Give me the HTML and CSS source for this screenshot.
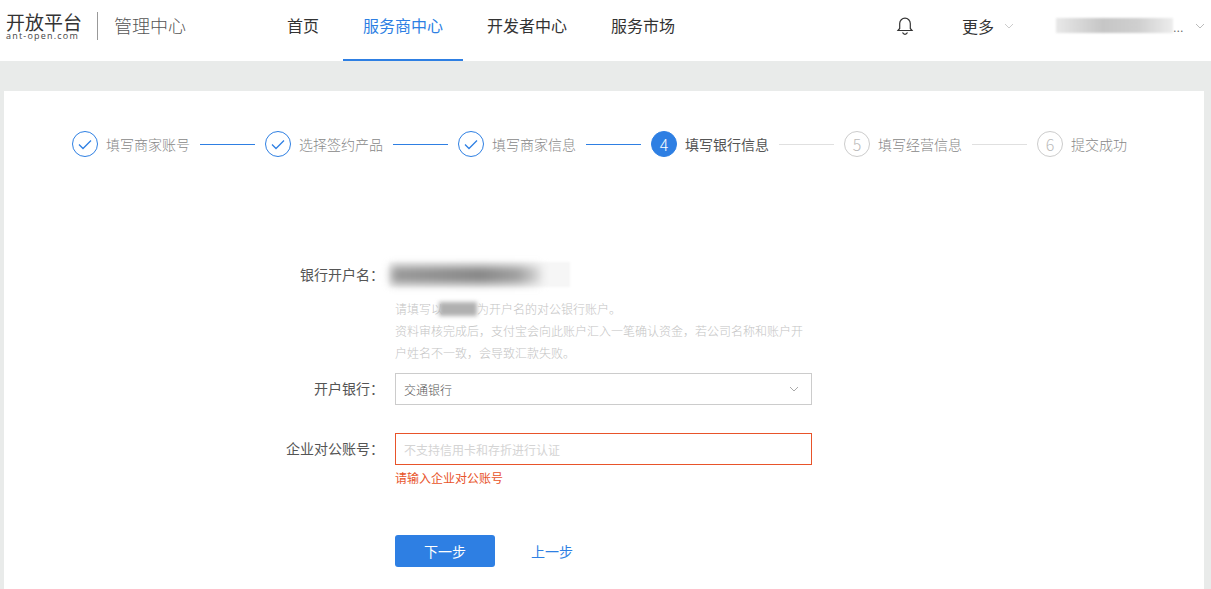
FILE: index.html
```html
<!DOCTYPE html>
<html lang="zh-CN">
<head>
  <meta charset="UTF-8">
  <title>填写银行信息 - 管理中心</title>
  <link rel="stylesheet" href="styles.css">
</head>
<body>

  <header class="topbar">
    <div class="logo">
      <div class="logo-name">开放平台</div>
      <div class="logo-site">ant-open.com</div>
    </div>
    <div class="logo-sub">管理中心</div>

    <nav class="nav">
      <a class="nav-item">首页</a>
      <a class="nav-item active">服务商中心</a>
      <a class="nav-item">开发者中心</a>
      <a class="nav-item">服务市场</a>
    </nav>

    <div class="top-right">
      <svg class="bell" width="18" height="20" viewBox="0 0 18 20" fill="none" stroke="#333" stroke-width="1.2">
        <path d="M2 14.5h14l-1.7-2V7.5a5.3 5.300 0 0 0-10.600 0v5z"/>
        <path d="M6.500 16.500c.6 1.200 1.500 1.800 2.500 1.800s1.900-.6 2.500-1.800"/>
      </svg>
      <span class="more">更多</span>
      <svg class="chev more-chev" width="10" height="6" viewBox="0 0 10 6" fill="none" stroke="#ccc"><path d="M1 1l4 4 4-4"/></svg>
      <div class="user">
        <span class="user-blur"></span>
        <span class="user-dots">...</span>
      </div>
      <svg class="chev" width="10" height="6" viewBox="0 0 10 6" fill="none" stroke="#bbb"><path d="M1 1l4 4 4-4"/></svg>
    </div>
  </header>

  <main class="card">
    <div class="steps">
      <div class="step done">
        <span class="circle"><svg width="14" height="11" viewBox="0 0 14 11" fill="none" stroke="#2e7fe3" stroke-width="1.300"><path d="M1 5.500l4 4 8-8"/></svg></span>
        <span class="step-text">填写商家账号</span>
      </div>
      <span class="line on"></span>
      <div class="step done">
        <span class="circle"><svg width="14" height="11" viewBox="0 0 14 11" fill="none" stroke="#2e7fe3" stroke-width="1.300"><path d="M1 5.500l4 4 8-8"/></svg></span>
        <span class="step-text">选择签约产品</span>
      </div>
      <span class="line on"></span>
      <div class="step done">
        <span class="circle"><svg width="14" height="11" viewBox="0 0 14 11" fill="none" stroke="#2e7fe3" stroke-width="1.300"><path d="M1 5.500l4 4 8-8"/></svg></span>
        <span class="step-text">填写商家信息</span>
      </div>
      <span class="line on"></span>
      <div class="step current">
        <span class="circle">4</span>
        <span class="step-text">填写银行信息</span>
      </div>
      <span class="line"></span>
      <div class="step">
        <span class="circle">5</span>
        <span class="step-text">填写经营信息</span>
      </div>
      <span class="line"></span>
      <div class="step">
        <span class="circle">6</span>
        <span class="step-text">提交成功</span>
      </div>
    </div>

    <form class="form">
      <div class="row name-row">
        <label class="label">银行开户名：</label>
        <div class="field">
          <div class="name-blur"><span class="name-blur-in"></span></div>
          <div class="help">
            <p>请填写以<span class="help-blur"></span>为开户名的对公银行账户。</p>
            <p>资料审核完成后，支付宝会向此账户汇入一笔确认资金，若公司名称和账户开户姓名不一致，会导致汇款失败。</p>
          </div>
        </div>
      </div>

      <div class="row">
        <label class="label">开户银行：</label>
        <div class="field">
          <div class="select">
            <span>交通银行</span>
            <svg width="10" height="6" viewBox="0 0 10 6" fill="none" stroke="#aaa"><path d="M1 1l4 4 4-4"/></svg>
          </div>
        </div>
      </div>

      <div class="row account-row">
        <label class="label">企业对公账号：</label>
        <div class="field">
          <input class="input error" type="text" placeholder="不支持信用卡和存折进行认证">
          <div class="error-text">请输入企业对公账号</div>
        </div>
      </div>

      <div class="row actions">
        <div class="field action-field">
          <button class="btn" type="button">下一步</button>
          <a class="prev">上一步</a>
        </div>
      </div>
    </form>
  </main>

</body>
</html>
```

FILE: styles.css
```css
* {
  box-sizing: border-box;
}

html, body {
  height: 100%;
}

body {
  margin: 0;
  overflow: hidden;
  background-color: #e9ebea;
  font-family: "Noto Sans CJK SC", "Noto Sans", sans-serif;
  font-size: 14px;
  font-weight: 300;
  color: #666;
}

/* top bar */
.topbar {
  display: flex;
  align-items: center;
  height: 61px;
  background: #fff;
}

.logo {
  align-self: flex-start;
  width: 98px;
  height: 28px;
  margin-top: 12px;
  padding-left: 6px;
  border-right: 1px solid #999;
}

.logo-name {
  height: 19px;
  font-size: 19px;
  font-weight: 400;
  line-height: 19px;
  color: #333;
  white-space: nowrap;
}

.logo-site {
  height: 9px;
  font-family: "Open Sans", sans-serif;
  font-size: 9px;
  line-height: 9px;
  font-weight: 400;
  letter-spacing: 1.2px;
  color: #444;
  white-space: nowrap;
}

.logo-sub {
  width: 169px;
  margin-bottom: 12px;
  padding-left: 16px;
  font-size: 18px;
  color: #555;
  white-space: nowrap;
}

.nav {
  display: flex;
  gap: 4px;
  height: 61px;
}

.nav-item {
  padding: 0 20px;
  line-height: 50px;
  font-size: 16px;
  font-weight: 400;
  color: #333;
  white-space: nowrap;
}

.nav-item.active {
  color: #2e7fe3;
  border-bottom: 2px solid #2e7fe3;
}

.top-right {
  display: flex;
  align-items: center;
  margin-left: auto;
  margin-bottom: 10px;
  padding-right: 6px;
}

.bell {
  margin-right: 48px;
}

.more {
  font-size: 16px;
  font-weight: 400;
  color: #333;
}

.more-chev {
  margin-left: 10px;
}

.user {
  display: flex;
  align-items: center;
  margin-left: 42px;
  margin-right: 12px;
}

.user-blur {
  flex-shrink: 0;
  width: 117px;
  height: 15px;
  background: linear-gradient(90deg, #e8e8e8, #c6c6c6 40%, #cfcfcf 70%, #ededed);
  filter: blur(1px);
}

.user-dots {
  width: 10px;
  color: #666;
}

.top-right .chev {
  flex-shrink: 0;
}

/* card */
.card {
  height: 498px;
  margin: 30px 7px 0 4px;
  padding: 40px 0 0 68px;
  background: #fff;
}

.steps {
  display: flex;
  align-items: center;
  height: 26px;
}

.step {
  display: flex;
  align-items: center;
  gap: 8px;
  white-space: nowrap;
}

.circle {
  display: flex;
  align-items: center;
  justify-content: center;
  width: 26px;
  height: 26px;
  border: 1px solid #ccc;
  border-radius: 50%;
  font-size: 16px;
  color: #bbb;
}

.step-text {
  width: 84px;
  color: #888;
}

.step.current .circle {
  background: #2e7fe3;
  border-color: #2e7fe3;
  color: #fff;
}

.step.current .step-text {
  color: #555;
  font-weight: 400;
}

.step.done .circle {
  border-color: #2e7fe3;
}

.line {
  width: 55px;
  height: 1px;
  margin: 0 10px;
  background: #e0e0e0;
}

.line.on {
  background: #2e7fe3;
}

/* form */
.form {
  margin-top: 104px;
  margin-left: -68px;
}

.row {
  display: flex;
}

.label {
  width: 380px;
  height: 30px;
  line-height: 30px;
  text-align: right;
  color: #555;
  font-weight: 400;
}

.name-row .label {
  margin-top: -2px;
}

.field {
  width: 417px;
  margin-left: 11px;
}

.name-row {
  height: 112px;
}

.name-blur {
  width: 181px;
  height: 25px;
  margin-top: 1px;
  margin-left: -6px;
  background: #f6f6f6;
  filter: blur(1px);
}

.name-blur-in {
  display: block;
  width: 150px;
  height: 18px;
  margin-left: 2px;
  transform: translateY(4px);
  background: linear-gradient(90deg, #9a9a9a, #868686 60%, #a0a0a0 85%, #ddd);
  filter: blur(4px);
}

.help {
  margin-top: 11px;
  font-size: 12px;
  line-height: 22px;
  color: #c4c4c4;
}

.help p {
  margin: 0;
}

.help-blur {
  display: inline-block;
  width: 38px;
  height: 14px;
  margin-left: -4px;
  vertical-align: -2px;
  background: #b0b0b0;
  filter: blur(2px);
}

.select {
  display: flex;
  align-items: center;
  justify-content: space-between;
  height: 32px;
  padding: 0 12px 0 8px;
  border: 1px solid #ccc;
  font-size: 12px;
  color: #555;
}

.account-row {
  margin-top: 28px;
}

.input {
  display: block;
  width: 100%;
  height: 32px;
  padding: 0 8px;
  border: 1px solid #ccc;
  border-radius: 0;
  outline: none;
  font-family: inherit;
  font-size: 12px;
}

.input::placeholder {
  color: #d4d4d4;
}

.input.error {
  border-color: #e8532a;
}

.error-text {
  margin-top: 3px;
  font-size: 12px;
  line-height: 20px;
  font-weight: 400;
  color: #e8532a;
}

.actions {
  margin-top: 47px;
  padding-left: 380px;
}

.action-field {
  display: flex;
  align-items: center;
}

.btn {
  width: 100px;
  height: 32px;
  border: none;
  border-radius: 3px;
  background: #2e7fe3;
  color: #fff;
  font-family: inherit;
  font-size: 14px;
  font-weight: 400;
  cursor: pointer;
}

.prev {
  margin-left: 36px;
  color: #2e7fe3;
  font-weight: 400;
}
```
